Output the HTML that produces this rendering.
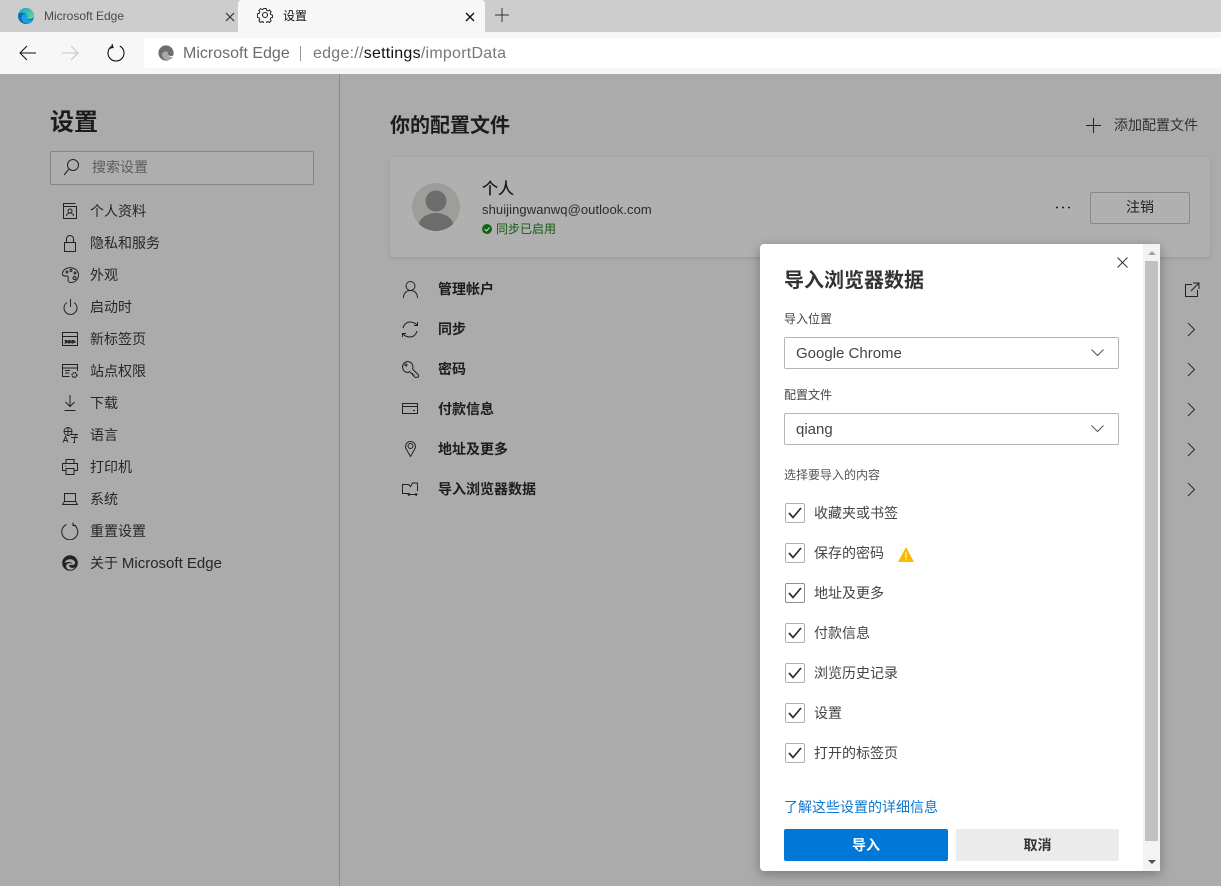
<!DOCTYPE html>
<html lang="zh"><head><meta charset="utf-8"><title>设置</title>
<style>
html,body{margin:0;padding:0;width:1221px;height:886px;overflow:hidden;background:#ababab}
body{position:relative;font-family:"Liberation Sans","Noto Sans CJK SC",sans-serif;font-size:14px;color:#1f1f1f}
.a,.t,svg{position:absolute}
.t{white-space:nowrap;line-height:20px;height:20px}
svg{fill:none;stroke:#222;stroke-width:1}
.nav{font-size:14px;color:#262626}
.row{font-size:14px;font-weight:700;color:#1d1d1d}
.dl{font-size:14px;color:#444}
.lb{font-size:12px;color:#444}
.sel{left:784px;width:333px;height:30px;border:1px solid #b5b5b5;border-radius:2px;background:#fff}
.cb{left:785px;width:18px;height:18px;border:1px solid #b0b0b0;border-radius:2px;background:#fff}
.ck{left:788px;stroke:#2b2b2b;stroke-width:1.7}
.chev{left:1187px;stroke:#2a2a2a}
</style></head><body>
<!-- chrome -->
<div class="a" style="left:0;top:0;width:1221px;height:32px;background:#cdcdcd"></div>
<div class="a" style="left:238px;top:0;width:247px;height:32px;background:#f7f7f7;border-radius:4px 4px 0 0"></div>
<div class="a" style="left:0;top:32px;width:1221px;height:42px;background:#f7f7f7"></div>
<div class="a" style="left:144px;top:38px;width:1077px;height:30px;background:#fff;border-radius:4px 0 0 4px"></div>
<svg style="left:17px;top:7px;stroke:none" width="18" height="18" viewBox="0 0 18 18"><defs><linearGradient id="g" x1="0" y1="0" x2="1" y2="1"><stop offset="0" stop-color="#1aa5c8"/><stop offset="1" stop-color="#5fe08a"/></linearGradient></defs><circle cx="9" cy="9" r="8" fill="#0f6cbd"/><path d="M1.500 6.500C3 2.500 6 1 9 1c4.500 0 8 3.500 8 7.500 0 2.500-2 3.500-4 3.500-1.500 0-3-.5-3.500-1.500 1-1.500.5-3.500-1.500-4.500-3-1.200-6 .5-7.500.5z" fill="url(#g)"/><path d="M4.500 10.500C4.500 7.500 7 6.500 9 7c1.500.5 2 2 1 3.500.5 2.500 3 3 6 2.500-.5 1.500-2 3-3.500 3.500-3 .5-5-.5-6.500-2-1-1-1.500-2.500-1.500-4z" fill="#1b9de2"/></svg>
<div class="t" style="left:44px;top:6px;font-size:12px;color:#4a4a4a">Microsoft Edge</div>
<svg style="left:225px;top:12px;stroke:#333;stroke-width:1.2" width="10" height="10"><path d="M1 1l8 8M9 1l-8 8"/></svg>
<svg style="left:257px;top:7px;stroke:#222;stroke-width:1.100" width="16" height="16" viewBox="0 0 16 16"><circle cx="8" cy="8" r="2.500"/><path d="M6.700.8h2.600l.4 2 1.500.7 1.800-1 1.800 1.900-1 1.700.6 1.500 2 .5v2.600l-2 .5-.6 1.500 1 1.700-1.800 1.900-1.800-1-1.500.6-.4 2H6.700l-.4-2-1.500-.6-1.800 1-1.800-1.900 1-1.700-.6-1.500-2-.5V6.600l2-.5.6-1.500-1-1.700 1.800-1.900 1.800 1 1.500-.7z" transform="translate(.8 .8) scale(.9)"/></svg>
<div class="t" style="left:283px;top:6px;font-size:12px;color:#111">设置</div>
<svg style="left:465px;top:12px;stroke:#111;stroke-width:1.400" width="10" height="10"><path d="M1 1l8 8M9 1l-8 8"/></svg>
<svg style="left:495px;top:8px;stroke:#333" width="14" height="14"><path d="M7 0v14M0 7h14"/></svg>
<svg style="left:19px;top:45px;stroke:#111" width="17" height="16"><path d="M17 8H1M8 1L1 8l7 7"/></svg>
<svg style="left:62px;top:45px;stroke:#c4c4c4" width="17" height="16"><path d="M0 8h16M9 1l7 7-7 7"/></svg>
<svg style="left:106px;top:43px;stroke:#111;stroke-width:1.100" width="20" height="20" viewBox="0 0 20 20"><path d="M13.800 3A8 8 0 1 1 6.200 3M6 1l1 3.500-3.500.8"/></svg>
<svg style="left:158px;top:45px" width="16" height="16" viewBox="0 0 16 16"><circle cx="8" cy="8" r="7.600" fill="#6e6e6e" stroke="none"/><path d="M4 11C3.500 7.500 6.500 6 8.500 6.500c1.800.5 2.300 2 1.300 3.500.5 2 3 2.600 5.400 2-1.500 2-3.500 3-5.500 3-2.500 0-4.900-1.500-5.700-4.500z" fill="#a9a9a9" stroke="none"/><path d="M9.800 10c.5 1.500 2.800 2.300 5.400 2l.5-1.500c-2 1-4.500.5-5.900-.5z" fill="#fff" stroke="none"/></svg>
<div class="t" style="left:183px;top:44px;font-size:16px;color:#6b6b6b">Microsoft Edge</div>
<div class="a" style="left:300px;top:46px;width:1px;height:15px;background:#999"></div>
<div class="t" style="left:313px;top:44px;font-size:16px;letter-spacing:.25px;color:#777">edge://<span style="color:#111">settings</span>/importData</div>
<!-- sidebar -->
<div class="a" style="left:339px;top:74px;width:1px;height:812px;background:#8c8c8c"></div>
<div class="t" style="left:50px;top:108px;line-height:30px;height:30px;font-size:24px;font-weight:700;color:#1c1c1c">设置</div>
<div class="a" style="left:50px;top:151px;width:262px;height:32px;border:1px solid #858585;border-radius:2px;background:#aeaeae"></div>
<svg style="left:63px;top:158px" width="16" height="18"><circle cx="10" cy="7" r="5.500"/><path d="M6 11l-5 6"/></svg>
<div class="t" style="left:92px;top:157px;color:#5c5c5c">搜索设置</div>
<svg style="left:62px;top:203px" width="16" height="16"><path d="M1.500 3.500V.5h12M1.500 3.500h13v12h-13zM1.500 3.500v12"/><circle cx="8" cy="8" r="2"/><path d="M4.500 13c0-4 7-4 7 0"/></svg>
<div class="t nav" style="left:90px;top:201px">个人资料</div>
<svg style="left:63px;top:235px" width="14" height="17"><path d="M1.500 7.500h11v9h-11zM3.500 7.500V4a3.500 3.500 0 0 1 7 0v3.500"/></svg>
<div class="t nav" style="left:90px;top:233px">隐私和服务</div>
<svg style="left:62px;top:267px" width="17" height="16"><path d="M8 .7C3.500.7.500 3.500.500 7c0 2 2 2 4 2 2 0 2 2 1.500 3.500C5.500 14 7 15.500 9 15.500c4 0 7.500-3 7.500-7.500S12.500.7 8 .7z"/><circle cx="5" cy="5" r="1" /><circle cx="9" cy="3.500" r="1"/><circle cx="13" cy="6" r="1"/><circle cx="12.500" cy="11" r="1.500"/></svg>
<div class="t nav" style="left:90px;top:265px">外观</div>
<svg style="left:63px;top:298px" width="15" height="18"><path d="M7.500 1v8M4 4.500a6.500 6.500 0 1 0 7 0"/></svg>
<div class="t nav" style="left:90px;top:297px">启动时</div>
<svg style="left:62px;top:332px" width="16" height="14"><path d="M.5.500h15v13H.5zM.5 4.500h15"/><path d="M3 8.500h10v2.500H3z" stroke-dasharray="2 1.500" fill="#333"/></svg>
<div class="t nav" style="left:90px;top:329px">新标签页</div>
<svg style="left:62px;top:364px" width="17" height="15"><path d="M15.500 7V.5H.5v12h7M.5 4h15M3 6.500h5M3 9h4v-.1"/><circle cx="12.500" cy="11" r="2.300" stroke-width="1.500" stroke-dasharray="1.500 .7"/></svg>
<div class="t nav" style="left:90px;top:361px">站点权限</div>
<svg style="left:63px;top:395px" width="14" height="16"><path d="M7 0v11M2.500 7L7 11.500 11.500 7M1.500 15.500h11"/></svg>
<div class="t nav" style="left:90px;top:393px">下载</div>
<svg style="left:62px;top:427px;stroke-width:.9" width="17" height="16"><circle cx="6" cy="4.500" r="4"/><path d="M2 4.500h8M6 .5v8M1 15.500L3.500 9.500 6 15.500M2 13.500h3M9 7.500h7M12.500 9.500l2-1M9 10.500h7M12.500 10.500v5l-1.500 0"/></svg>
<div class="t nav" style="left:90px;top:425px">语言</div>
<svg style="left:62px;top:459px" width="16" height="16"><path d="M4 4.500V.5h8v4M4 11.500H.5v-7h15v7H12M4 9.500h8v6H4zM3 7h1"/></svg>
<div class="t nav" style="left:90px;top:457px">打印机</div>
<svg style="left:62px;top:493px" width="16" height="12"><path d="M2.500 8.500V.5h11v8M.5 11.500l2-3h11l2 3z"/></svg>
<div class="t nav" style="left:90px;top:489px">系统</div>
<svg style="left:61px;top:522px" width="18" height="18"><path d="M5.500 2.500A8 8 0 1 0 12 2.500M12 .5V3.500H15" stroke-width="1"/></svg>
<div class="t nav" style="left:90px;top:521px">重置设置</div>
<svg style="left:62px;top:555px" width="16" height="16" viewBox="0 0 16 16"><circle cx="8" cy="8" r="7.800" fill="#222" stroke="none"/><path d="M2.500 8C4 3.500 11 3 13 7c.5 2-1 3-3 3H7c0 2.500 3 3.500 6 2.500-2 2.500-6 3-8 1-1.500-2-1-4 1-5 2-.8 4 0 4.500 1 0-2-3-3.500-8-1.500z" fill="#ababab" stroke="none"/></svg>
<div class="t nav" style="left:90px;top:553px">关于 <span style="font-size:15px">Microsoft Edge</span></div>
<!-- content -->
<div class="t" style="left:390px;top:111px;line-height:30px;height:30px;font-size:20px;font-weight:700;color:#1c1c1c">你的配置文件</div>
<svg style="left:1086px;top:118px;stroke:#222" width="15" height="15"><path d="M7.500 0v15M0 7.500h15"/></svg>
<div class="t" style="left:1114px;top:115px;font-size:14px;color:#303030">添加配置文件</div>
<div class="a" style="left:390px;top:157px;width:820px;height:100px;background:#b0b0b0;border-radius:4px;box-shadow:0 1px 3px rgba(0,0,0,.12)"></div>
<svg style="left:412px;top:183px" width="48" height="48"><defs><clipPath id="c"><circle cx="24" cy="24" r="24"/></clipPath></defs><circle cx="24" cy="24" r="24" fill="#9d9d9a" stroke="none"/><g clip-path="url(#c)" fill="#6c6c6c" stroke="none"><circle cx="24" cy="18" r="10.500"/><ellipse cx="24" cy="44" rx="18" ry="14"/></g></svg>
<div class="t" style="left:482px;top:180px;font-size:16px;color:#111;-webkit-text-stroke:.2px #111">个人</div>
<div class="t" style="left:482px;top:200px;font-size:13px;letter-spacing:.08px;color:#2b2b2b">shuijingwanwq@outlook.com</div>
<svg style="left:482px;top:224px" width="10" height="10"><circle cx="5" cy="5" r="5" fill="#0d660d" stroke="none"/><path d="M2.500 5l2 2 3-3.500" stroke="#ccc" stroke-width="1"/></svg>
<div class="t" style="left:496px;top:219px;font-size:12px;color:#125c12">同步已启用</div>
<svg style="left:1056px;top:206px" width="16" height="3"><path d="M0 1.500h2M6 1.500h2M12 1.500h2" stroke-width="1.600"/></svg>
<div class="a" style="left:1090px;top:192px;width:98px;height:30px;border:1px solid #878787;border-radius:2px"></div>
<div class="t" style="left:1126px;top:197px;color:#222">注销</div>
<svg style="left:403px;top:281px" width="15" height="17"><circle cx="7.500" cy="5" r="4.500"/><path d="M.5 17c0-5 3-7.500 7-7.500s7 2.500 7 7.500"/></svg>
<div class="t row" style="left:438px;top:279px">管理帐户</div>
<svg style="left:402px;top:321px" width="16" height="17"><path d="M1 7C2 3 5 1 8 1c3 0 5 1 7 3M15.500 1v3.500H12M15 10c-1 4-4 6-7 6-3 0-5-1-7-3M.5 16v-3.500H4"/></svg>
<div class="t row" style="left:438px;top:319px">同步</div>
<svg style="left:402px;top:361px" width="17" height="17"><path d="M6 .5A5.500 5.500 0 1 0 6 11.500L7.500 10.500 9.500 12.500l1 0 0 1.500 1.500 0 0 1.500 1.500 1 3-.5V14L10.500 8 11 6A5.500 5.500 0 0 0 6 .5z"/><circle cx="4" cy="4" r="1"/></svg>
<div class="t row" style="left:438px;top:359px">密码</div>
<svg style="left:402px;top:403px" width="16" height="12"><path d="M.5.500h15v10H.5zM.5 3.500h15M11 7.500h2"/></svg>
<div class="t row" style="left:438px;top:399px">付款信息</div>
<svg style="left:405px;top:441px" width="11" height="16"><path d="M5.500 15.500L1.500 8.500A5 5 0 1 1 9.500 8.500z"/><circle cx="5.500" cy="5" r="2.500"/></svg>
<div class="t row" style="left:438px;top:439px">地址及更多</div>
<svg style="left:402px;top:482px" width="16" height="14"><path d="M7 11.500H.5V2.500h6l2 2 2-3.500h5v5M15.500 5.500V9M6 12.500h9M7.500 11L6 12.500 7.500 14M13.500 11l1.500 1.500-1.500 1.500"/></svg>
<div class="t row" style="left:438px;top:479px">导入浏览器数据</div>
<svg style="left:1185px;top:282px" width="15" height="15"><path d="M7 2.500H.5v12h12V8M8 1h6v6M14 1L6 9"/></svg>
<svg class="chev" style="top:322px" width="9" height="15"><path d="M1 1l6.500 6.500L1 14"/></svg>
<svg class="chev" style="top:362px" width="9" height="15"><path d="M1 1l6.500 6.500L1 14"/></svg>
<svg class="chev" style="top:402px" width="9" height="15"><path d="M1 1l6.500 6.500L1 14"/></svg>
<svg class="chev" style="top:442px" width="9" height="15"><path d="M1 1l6.500 6.500L1 14"/></svg>
<svg class="chev" style="top:482px" width="9" height="15"><path d="M1 1l6.500 6.500L1 14"/></svg>
<!-- dialog -->
<div class="a" style="left:760px;top:244px;width:400px;height:627px;background:#fff;border-radius:4px 0 0 4px;box-shadow:0 3px 12px rgba(0,0,0,.3)"></div>
<div class="a" style="left:1143px;top:244px;width:17px;height:627px;background:#f3f3f3"></div>
<div class="a" style="left:1145px;top:261px;width:13px;height:580px;background:#c1c1c1"></div>
<div class="a" style="left:1148px;top:251px;border:4px solid transparent;border-top:0;border-bottom:4px solid #a3a3a3"></div>
<div class="a" style="left:1148px;top:860px;border:4px solid transparent;border-bottom:0;border-top:4px solid #505050"></div>
<svg style="left:1117px;top:257px;stroke:#333" width="11" height="11"><path d="M.5.500l10 10M10.500.500l-10 10"/></svg>
<div class="t" style="left:784px;top:266px;line-height:30px;height:30px;font-size:20px;font-weight:700;color:#333">导入浏览器数据</div>
<div class="t lb" style="left:784px;top:309px">导入位置</div>
<div class="a sel" style="top:337px"></div>
<div class="t" style="left:796px;top:344px;font-size:15px;color:#444">Google Chrome</div>
<svg style="left:1091px;top:349px;stroke:#555" width="13" height="8"><path d="M.5.500l6 6 6-6"/></svg>
<div class="t lb" style="left:784px;top:385px">配置文件</div>
<div class="a sel" style="top:413px"></div>
<div class="t" style="left:796px;top:420px;font-size:15px;color:#444">qiang</div>
<svg style="left:1091px;top:425px;stroke:#555" width="13" height="8"><path d="M.5.500l6 6 6-6"/></svg>
<div class="t lb" style="left:784px;top:465px;color:#555">选择要导入的内容</div>
<div class="a cb" style="top:503px"></div><svg class="ck" style="top:507px" width="14" height="12"><path d="M1 6l4 4.500L13 1"/></svg><div class="t dl" style="left:814px;top:503px">收藏夹或书签</div>
<div class="a cb" style="top:543px"></div><svg class="ck" style="top:547px" width="14" height="12"><path d="M1 6l4 4.500L13 1"/></svg><div class="t dl" style="left:814px;top:543px">保存的密码</div>
<svg style="left:898px;top:547px" width="16" height="15"><path d="M8 0l8 15H0z" fill="#fdb900" stroke="none"/><path d="M8 5v6M8 12v1.500" stroke="#fff" stroke-width="1"/></svg>
<div class="a cb" style="top:583px;border-color:#8e8e8e"></div><svg class="ck" style="top:587px" width="14" height="12"><path d="M1 6l4 4.500L13 1"/></svg><div class="t dl" style="left:814px;top:583px">地址及更多</div>
<div class="a cb" style="top:623px"></div><svg class="ck" style="top:627px" width="14" height="12"><path d="M1 6l4 4.500L13 1"/></svg><div class="t dl" style="left:814px;top:623px">付款信息</div>
<div class="a cb" style="top:663px"></div><svg class="ck" style="top:667px" width="14" height="12"><path d="M1 6l4 4.500L13 1"/></svg><div class="t dl" style="left:814px;top:663px">浏览历史记录</div>
<div class="a cb" style="top:703px"></div><svg class="ck" style="top:707px" width="14" height="12"><path d="M1 6l4 4.500L13 1"/></svg><div class="t dl" style="left:814px;top:703px">设置</div>
<div class="a cb" style="top:743px"></div><svg class="ck" style="top:747px" width="14" height="12"><path d="M1 6l4 4.500L13 1"/></svg><div class="t dl" style="left:814px;top:743px">打开的标签页</div>
<div class="t" style="left:784px;top:797px;font-size:14px;color:#0f78d0">了解这些设置的详细信息</div>
<div class="a" style="left:784px;top:829px;width:164px;height:32px;background:#0078d7;border-radius:2px"></div>
<div class="t" style="left:784px;top:835px;width:164px;text-align:center;font-size:14px;font-weight:700;color:#fff">导入</div>
<div class="a" style="left:956px;top:829px;width:163px;height:32px;background:#ebebeb;border-radius:2px"></div>
<div class="t" style="left:956px;top:835px;width:163px;text-align:center;font-size:14px;font-weight:700;color:#333">取消</div>
</body></html>
